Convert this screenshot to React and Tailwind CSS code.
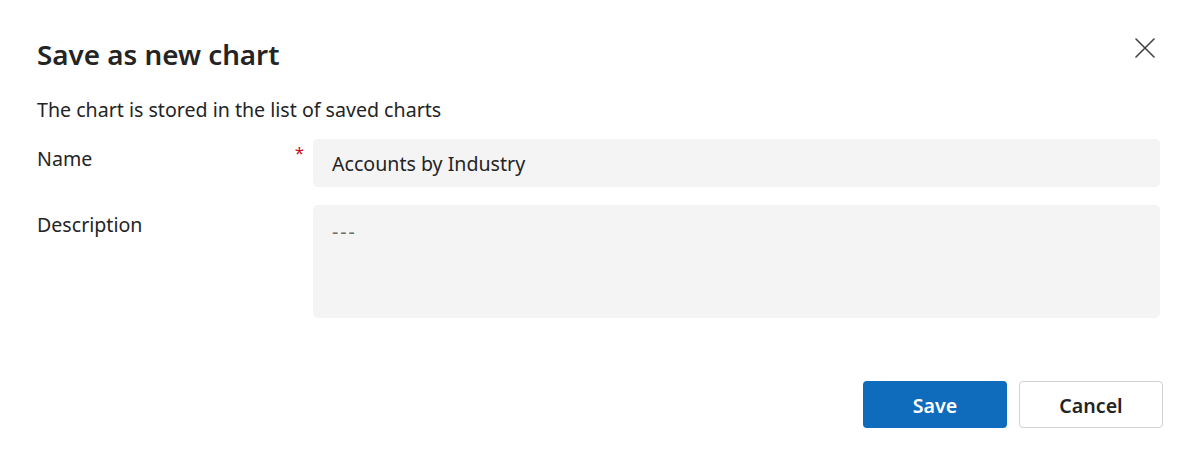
import React, { useState } from 'react';

function App() {
  const [name, setName] = useState('Accounts by Industry');
  const [description, setDescription] = useState('');

  return (
    <div className="w-[1200px] h-[465px] bg-white text-[#242424] font-['Noto_Sans',sans-serif] px-[37px]">
      {/* Header */}
      <div className="flex justify-between items-start pt-[36px]">
        <h1 className="text-[27.8px] leading-[36px] font-semibold">Save as new chart</h1>
        <button className="mt-[2px] mr-[8px] w-[20px] h-[20px] flex items-center justify-center text-[#424242]">
          <svg width="20" height="20" viewBox="0 0 20 20" fill="none" stroke="currentColor" strokeWidth="1.6" strokeLinecap="round">
            <path d="M1 1L19 19M19 1L1 19" />
          </svg>
        </button>
      </div>

      <p className="mt-[24px] text-[19.6px] leading-[28px]">The chart is stored in the list of saved charts</p>

      {/* Name */}
      <div className="flex mt-[15px] pr-[3px]">
        <label className="w-[276px] flex justify-between pt-[6px] text-[19.6px] leading-[28px]">
          <span>Name</span>
          <span className="text-[#c50f1f] text-[17px] leading-[20px] mr-[9px] -mt-[2px]">*</span>
        </label>
        <input
          value={name}
          onChange={(e) => setName(e.target.value)}
          className="flex-1 h-[48px] bg-[#f4f4f4] rounded-[5px] px-[19px] pt-[1px] text-[19.6px] outline-none"
        />
      </div>

      {/* Description */}
      <div className="flex mt-[18px] pr-[3px]">
        <label className="w-[276px] pt-[6px] text-[19.6px] leading-[28px]">Description</label>
        <textarea
          value={description}
          onChange={(e) => setDescription(e.target.value)}
          placeholder="---"
          className="flex-1 h-[113px] bg-[#f4f4f4] rounded-[5px] px-[19px] pt-[13px] text-[19.6px] leading-[28px] tracking-[2px] resize-none outline-none placeholder:text-[#707070]"
        />
      </div>

      {/* Actions */}
      <div className="flex justify-end gap-[12px] mt-[63px]">
        <button className="w-[144px] h-[47px] pt-[2px] rounded-[4px] bg-[#0f6cbd] text-white text-[19.6px] font-semibold">Save</button>
        <button className="w-[144px] h-[47px] pt-[2px] rounded-[4px] border border-[#d1d1d1] bg-white text-[19.6px] font-semibold">Cancel</button>
      </div>
    </div>
  );
}

export default App;
